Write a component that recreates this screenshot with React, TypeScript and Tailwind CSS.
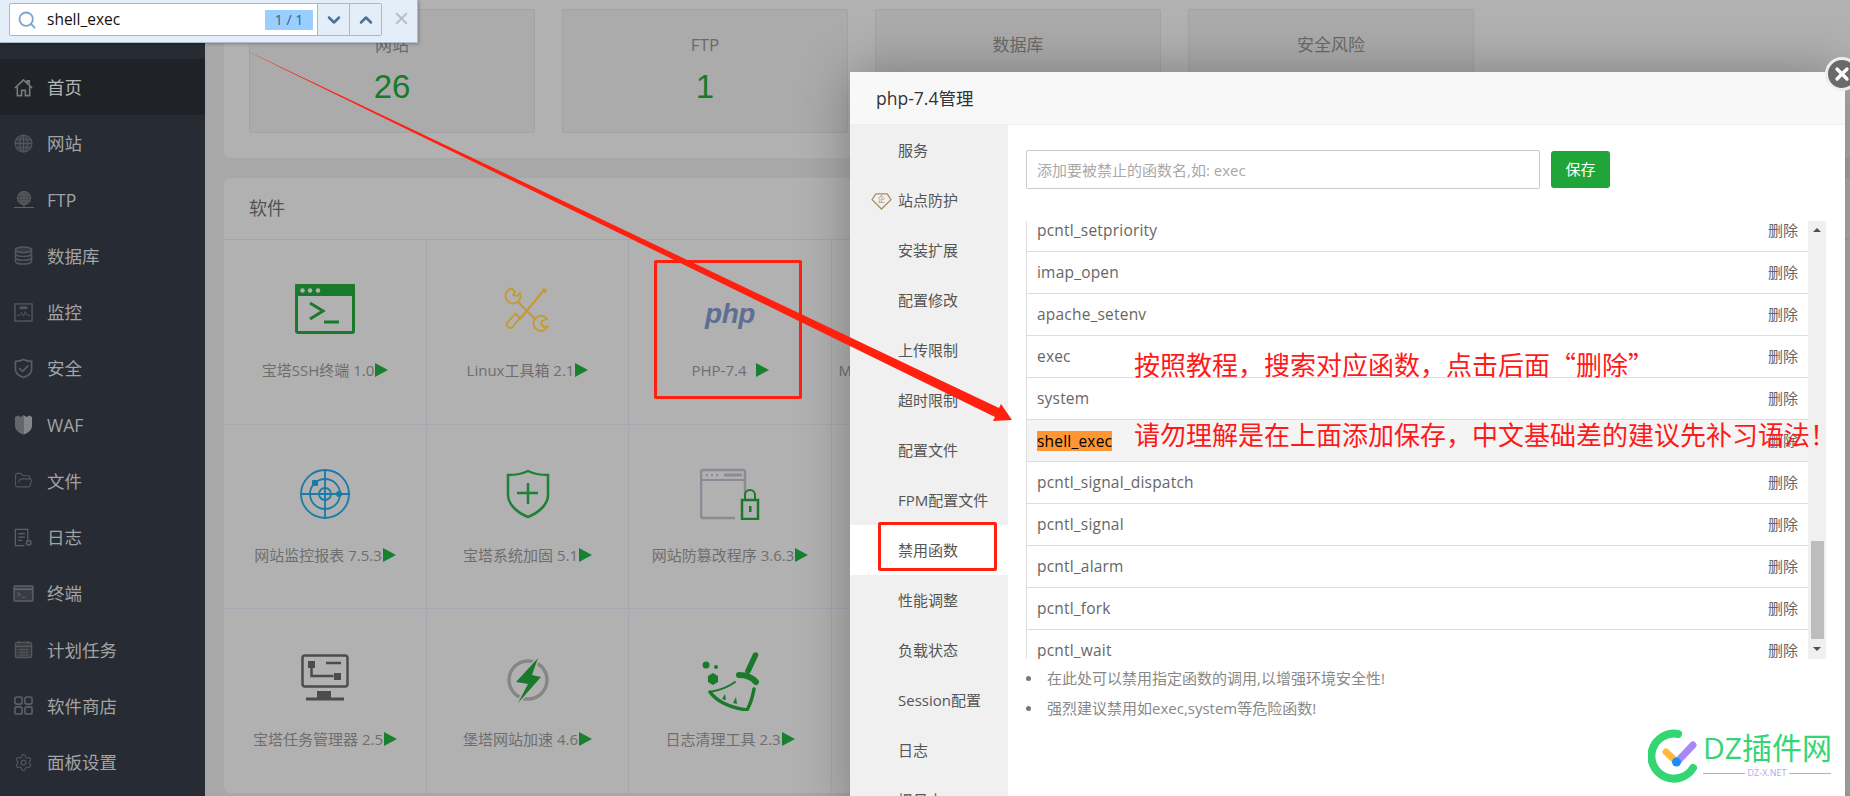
import { ChevronDown, ChevronUp, X, Search, FolderOpen, Settings } from 'lucide-react';
import type { ReactNode } from 'react';

const sideIcon = 'h-[19px] w-[19px] text-[#54575c]';

function HomeIcon() {
  return (
    <svg viewBox="0 0 20 20" className="h-[19px] w-[19px] text-[#7a7b7d]" fill="none" stroke="currentColor" strokeWidth="1.700">
      <path d="M1 10.500L10 2l4 3.800V3h2v4.500l3 3" />
      <path d="M3.500 9v9.500h4.500V13h4v5.500h4.500V9" />
    </svg>
  );
}

function GlobeIcon() {
  return (
    <svg viewBox="0 0 20 20" className={sideIcon} fill="#383b41" stroke="currentColor" strokeWidth="1.100">
      <circle cx="10" cy="10" r="9" />
      <ellipse cx="10" cy="10" rx="4" ry="9" fill="none" />
      <path d="M1 10h18M2.200 5.500h15.600M2.200 14.500h15.600M10 1v18" fill="none" />
    </svg>
  );
}

function FtpIcon() {
  return (
    <svg viewBox="0 0 20 20" className="h-[20px] w-[20px] text-[#5d6065]" fill="none" stroke="currentColor" strokeWidth="1.100">
      <circle cx="10" cy="8" r="6.500" fill="#383b41" />
      <ellipse cx="10" cy="8" rx="3" ry="6.500" />
      <path d="M3.500 8h13M4.500 5h11M4.500 11h11M10 1.500v13M0 17.500h20M10 15v2" />
    </svg>
  );
}

function DbIcon() {
  return (
    <svg viewBox="0 0 20 20" className={sideIcon} fill="none" stroke="currentColor" strokeWidth="1.600">
      <ellipse cx="10" cy="4" rx="8.500" ry="3" fill="#383b41" />
      <path d="M1.500 4v12c0 1.700 3.800 3 8.500 3s8.500-1.300 8.500-3V4" />
      <path d="M1.500 8c0 1.700 3.800 3 8.500 3s8.500-1.300 8.500-3M1.500 12c0 1.700 3.800 3 8.500 3s8.500-1.300 8.500-3" />
    </svg>
  );
}

function MonitorIcon() {
  return (
    <svg viewBox="0 0 20 20" className={sideIcon} fill="none" stroke="currentColor" strokeWidth="1.500">
      <rect x="1" y="1" width="18" height="18" />
      <path d="M3 13h3l2-3 2 4 2-5 2 4h3" strokeWidth="1" />
      <rect x="6" y="3.500" width="8" height="3" fill="currentColor" stroke="none" />
    </svg>
  );
}

function ShieldIcon() {
  return (
    <svg viewBox="0 0 20 22" className="h-[21px] w-[19px] text-[#5b5e63]" fill="none" stroke="currentColor" strokeWidth="1.800">
      <path d="M10 1.500c3 1.500 5.500 2 8.500 2V12c0 4-4 6.800-8.500 8.500C5.500 18.800 1.500 16 1.500 12V3.500c3 0 5.500-.5 8.500-2z" />
      <path d="M5.500 10.500l3.500 3.500 6-6" />
    </svg>
  );
}

function WafIcon() {
  return (
    <svg viewBox="0 0 20 22" className="h-[21px] w-[19px]">
      <path d="M1 3l3-1.500L7 3l3-2v20.500C5.500 20 1 17 1 12z" fill="#64676b" />
      <path d="M19 3l-3-1.500L13 3l-3-2v20.500c4.500-1.500 9-4.500 9-9.500z" fill="#84868a" />
    </svg>
  );
}

function LogIcon() {
  return (
    <svg viewBox="0 0 20 20" className="h-[19px] w-[19px] text-[#5d6065]" fill="none" stroke="currentColor" strokeWidth="1.300">
      <path d="M11 18.500H1.500v-17h13V12" />
      <path d="M4.500 6h7M4.500 9.500h7M4.500 13h4" />
      <circle cx="15.500" cy="15.500" r="2.300" strokeWidth="1.600" />
    </svg>
  );
}

function ConsoleIcon() {
  return (
    <svg viewBox="0 0 22 18" className="h-[17px] w-[21px] text-[#5f6267]" fill="none" stroke="currentColor" strokeWidth="1.500">
      <rect x="1" y="1" width="20" height="16" rx="1" fill="#383b41" />
      <path d="M1 4.500h20" strokeWidth="2" />
      <path d="M4.500 8l3 2-3 2M9 13h4" strokeWidth="1.200" />
    </svg>
  );
}

function CalendarIcon() {
  return (
    <svg viewBox="0 0 20 20" className={sideIcon} fill="none" stroke="currentColor" strokeWidth="1.500">
      <rect x="1.500" y="2.500" width="17" height="16" rx="2" fill="#383b41" />
      <path d="M5.500 1v3M14.500 1v3M1.500 6.500h17" />
      <path d="M4.500 10h11M4.500 13h11M4.500 16h11M7.500 9v8M10.500 9v8M13.500 9v8" strokeWidth="0.800" />
    </svg>
  );
}

function StoreIcon() {
  return (
    <svg viewBox="0 0 20 20" className="h-[19px] w-[19px] text-[#5d6065]" fill="none" stroke="currentColor" strokeWidth="1.700">
      <rect x="1" y="1" width="7.500" height="7.500" rx="2" />
      <rect x="11.500" y="1" width="7.500" height="7.500" rx="2" />
      <rect x="1" y="11.500" width="7.500" height="7.500" rx="2" />
      <rect x="11.500" y="11.500" width="7.500" height="7.500" rx="2" />
    </svg>
  );
}

const sideItems: { label: string; icon: ReactNode }[] = [
  { label: '首页', icon: <HomeIcon /> },
  { label: '网站', icon: <GlobeIcon /> },
  { label: 'FTP', icon: <FtpIcon /> },
  { label: '数据库', icon: <DbIcon /> },
  { label: '监控', icon: <MonitorIcon /> },
  { label: '安全', icon: <ShieldIcon /> },
  { label: 'WAF', icon: <WafIcon /> },
  { label: '文件', icon: <FolderOpen className={sideIcon} strokeWidth={1.4} /> },
  { label: '日志', icon: <LogIcon /> },
  { label: '终端', icon: <ConsoleIcon /> },
  { label: '计划任务', icon: <CalendarIcon /> },
  { label: '软件商店', icon: <StoreIcon /> },
  { label: '面板设置', icon: <Settings className={sideIcon} strokeWidth={1.4} /> },
];

function SshIcon() {
  return (
    <svg viewBox="0 0 60 50" className="h-[50px] w-[60px]">
      <rect x="1.500" y="1.500" width="57" height="47" rx="1.500" fill="none" stroke="#1a7a2c" strokeWidth="3" />
      <rect x="0" y="0" width="60" height="12" rx="1" fill="#1a7a2c" />
      <circle cx="7.500" cy="6.500" r="2.300" fill="#b0b0b0" />
      <circle cx="15" cy="6.500" r="2.300" fill="#b0b0b0" />
      <circle cx="23" cy="6.500" r="2.300" fill="#b0b0b0" />
      <path d="M15 19l13 8-13 8M29 38h15" fill="none" stroke="#1a7a2c" strokeWidth="3" />
    </svg>
  );
}

function ToolsIcon() {
  return (
    <svg viewBox="0 0 47 45" className="h-[45px] w-[47px]" fill="none" stroke="#c49a2e" strokeWidth="1.800">
      <path d="M40 3L16 32" strokeWidth="2" strokeLinecap="round" />
      <path d="M40 3l1 1" strokeWidth="3.500" strokeLinecap="round" />
      <path d="M11.500 26.500l4.500 4.500-8 9.500c-2 2-7-2-5-4.500z" strokeLinejoin="round" />
      <path d="M14 15l17 17" />
      <path d="M8 1.500L11 5 9 8l4 1 3-3A7.500 7.500 0 1 1 8 1.500z" strokeLinejoin="round" />
      <path d="M43 32l-5 2-1 3 3 3 4-1A7.500 7.500 0 1 1 43 32z" strokeLinejoin="round" />
    </svg>
  );
}

function PhpIcon() {
  return (
    <div className="flex h-[50px] w-[60px] items-center justify-center pt-[10px] font-['Liberation_Sans',sans-serif] text-[28px] font-bold italic tracking-[-0.5px] text-[#5f6f94]">
      php
    </div>
  );
}

function RadarIcon() {
  return (
    <svg viewBox="0 0 50 50" className="h-[50px] w-[50px]" fill="none" stroke="#1a7ba8" strokeWidth="1.800">
      <circle cx="25" cy="25" r="24" />
      <circle cx="25" cy="25" r="15" />
      <circle cx="25" cy="25" r="6" />
      <path d="M25 0v50M0 25h50" />
      <rect x="12" y="11" width="6" height="6" rx="1" fill="#1a7ba8" stroke="none" />
      <circle cx="39" cy="25" r="3" fill="#1a7ba8" stroke="none" />
    </svg>
  );
}

function ShieldPlusIcon() {
  return (
    <svg viewBox="0 0 46 50" className="h-[50px] w-[46px]" fill="none" stroke="#1d8136" strokeWidth="2.500">
      <path d="M23 2c6 3 12 4 20 4v20c0 10-10 18-20 22C13 44 3 36 3 26V6c8 0 14-1 20-4z" />
      <path d="M23 14v21M12 24h21" />
    </svg>
  );
}

function WindowLockIcon() {
  return (
    <svg viewBox="0 0 60 52" className="h-[52px] w-[60px]">
      <path d="M45 26V4a2 2 0 0 0-2-2H3a2 2 0 0 0-2 2v44a2 2 0 0 0 2 2h32" fill="none" stroke="#8a8b94" strokeWidth="2.500" />
      <path d="M1 12h44" stroke="#8a8b94" strokeWidth="2" />
      <path d="M24 7h18" stroke="#8a8b94" strokeWidth="3" />
      <circle cx="7" cy="7" r="1.200" fill="#8a8b94" />
      <circle cx="12" cy="7" r="1.200" fill="#8a8b94" />
      <circle cx="17" cy="7" r="1.200" fill="#8a8b94" />
      <rect x="42" y="32" width="16" height="19" fill="none" stroke="#1a7a2c" strokeWidth="2.500" />
      <path d="M45 32v-5a5 5 0 0 1 10 0v5" fill="none" stroke="#1a7a2c" strokeWidth="2" />
      <rect x="49" y="38" width="2.500" height="6" fill="#1a7a2c" />
    </svg>
  );
}

function TaskIcon() {
  return (
    <svg viewBox="0 0 48 48" className="h-[48px] w-[48px]" fill="none" stroke="#4c4c4c" strokeWidth="2.500">
      <rect x="1.500" y="1.500" width="45" height="31" rx="2.500" />
      <rect x="7" y="7" width="7" height="7" fill="#4c4c4c" stroke="none" />
      <rect x="33" y="19" width="7" height="7" fill="#4c4c4c" stroke="none" />
      <path d="M10.500 14v8h22M25 9h15" />
      <rect x="16" y="37" width="14" height="7" fill="#4c4c4c" stroke="none" />
      <path d="M5 45h38" strokeWidth="3" />
    </svg>
  );
}

function BoltIcon() {
  return (
    <svg viewBox="0 0 46 48" className="mt-[6px] h-[48px] w-[46px]">
      <circle cx="23" cy="23" r="19" fill="none" stroke="#868686" strokeWidth="3.500" />
      <polygon points="33,1 11,25 23,27 13,46 36,20 27,18" fill="#1a7a2c" stroke="#b1b1b1" strokeWidth="3" paintOrder="stroke" />
    </svg>
  );
}

function BroomIcon() {
  return (
    <svg viewBox="0 0 60 60" className="mt-[6px] h-[60px] w-[60px]" fill="none" stroke="#1a7a2c">
      <path d="M55.500 4L48 20" strokeWidth="5.500" strokeLinecap="round" />
      <path d="M39 24Q50 24 56 31" strokeWidth="6" strokeLinecap="round" />
      <path d="M35 31Q26 38 10 41" strokeWidth="2" strokeLinecap="round" />
      <path d="M10 41Q20 55 47 59Q52 50 54 38" strokeWidth="3.500" strokeLinejoin="round" strokeLinecap="round" />
      <path d="M22 48l3-5 1 6zM33 52l3-6 1 7z" fill="#1a7a2c" stroke="none" />
      <circle cx="6" cy="14" r="3.500" fill="#1a7a2c" stroke="none" />
      <circle cx="16" cy="16" r="2" fill="#1a7a2c" stroke="none" />
      <path d="M8 25l5-3 5 3v6l-5 3-5-3z" fill="#1a7a2c" stroke="none" />
    </svg>
  );
}

const softwareRows: { label: string; icon: ReactNode; gap?: boolean }[] = [
  { label: '宝塔SSH终端 1.0', icon: <SshIcon /> },
  { label: 'Linux工具箱 2.1', icon: <ToolsIcon /> },
  { label: 'PHP-7.4', icon: <PhpIcon />, gap: true },
  { label: 'MySQL主从复制(重构版) 2', icon: null },
  { label: '网站监控报表 7.5.3', icon: <RadarIcon /> },
  { label: '宝塔系统加固 5.1', icon: <ShieldPlusIcon /> },
  { label: '网站防篡改程序 3.6.3', icon: <WindowLockIcon /> },
  { label: '', icon: null },
  { label: '宝塔任务管理器 2.5', icon: <TaskIcon /> },
  { label: '堡塔网站加速 4.6', icon: <BoltIcon /> },
  { label: '日志清理工具 2.3', icon: <BroomIcon /> },
  { label: '', icon: null },
];

const stats = [
  { title: '网站', value: '26' },
  { title: 'FTP', value: '1' },
  { title: '数据库', value: '' },
  { title: '安全风险', value: '' },
];

const modalNav = ['服务', '站点防护', '安装扩展', '配置修改', '上传限制', '超时限制', '配置文件', 'FPM配置文件', '禁用函数', '性能调整', '负载状态', 'Session配置', '日志', '慢日志'];

const functions = ['pcntl_setpriority', 'imap_open', 'apache_setenv', 'exec', 'system', 'shell_exec', 'pcntl_signal_dispatch', 'pcntl_signal', 'pcntl_alarm', 'pcntl_fork', 'pcntl_wait'];

function FindBar() {
  return (
    <div className="absolute left-0 top-0 z-40 flex h-[43px] w-[418px] items-start border-b border-r border-[#a9bcd0] bg-[#e4eef9] pl-[9px] pt-[3px] shadow-[1px_1px_3px_rgba(0,0,0,0.25)]">
      <div className="flex h-[33px] w-[373px] items-center rounded-[2px] border border-[#a6b8cc] bg-white">
        <Search className="ml-[7px] h-[20px] w-[20px] text-[#7ba7cf]" strokeWidth={2.2} />
        <span className="ml-[10px] flex-1 text-[15.500px] text-[#111]">shell_exec</span>
        <span className="flex h-[20px] w-[48px] items-center justify-center bg-[#99ceff] text-[14px] text-[#3a5f85]">1 / 1</span>
        <span className="ml-[4px] flex h-full w-[32px] items-center justify-center border-l border-[#a6b8cc] bg-[#e4eef9]">
          <ChevronDown className="h-[20px] w-[20px] text-[#4e7096]" strokeWidth={3} />
        </span>
        <span className="flex h-full w-[32px] items-center justify-center border-l border-[#a6b8cc] bg-[#e4eef9]">
          <ChevronUp className="h-[20px] w-[20px] text-[#4e7096]" strokeWidth={3} />
        </span>
      </div>
      <X className="ml-[10px] mt-[6px] h-[19px] w-[19px] text-[#b9bdc2]" strokeWidth={2.5} />
    </div>
  );
}

function Sidebar() {
  return (
    <aside className="w-[205px] shrink-0 bg-[#272b33] pt-[59px]">
      {sideItems.map((item, i) => (
        <div key={item.label} className={`flex h-[56.25px] items-center ${i === 0 ? 'bg-[#1f2226] text-[#b4b4b4]' : 'text-[#a3a3a3]'}`}>
          <span className="flex w-[48px] justify-center pr-[1px]">{item.icon}</span>
          <span className="-ml-[1px] text-[17.500px]">{item.label}</span>
        </div>
      ))}
    </aside>
  );
}

function Main() {
  return (
    <main className="flex-1 bg-[#a8a8a8] pl-[19px]">
      <section className="flex h-[158px] gap-[27px] rounded-bl-[6px] bg-[#b1b1b1] pl-[25px] pt-[9px]">
        {stats.map((s) => (
          <div key={s.title} className="flex h-[124px] w-[286px] flex-col items-center rounded-[2px] border border-[#a3a3a3] bg-[#ababab] pt-[23px]">
            <span className="text-[17px] leading-[24px] text-[#6a6a6a]">{s.title}</span>
            <span className="mt-[10px] font-['Liberation_Sans',sans-serif] text-[33px] leading-[40px] text-[#197a2b]">{s.value}</span>
          </div>
        ))}
      </section>
      <section className="mt-[20px] h-[615px] rounded-l-[6px] bg-[#b1b1b1]">
        <div className="flex h-[62px] items-center border-b border-[#a5a5a5] pl-[25px] text-[18px] text-[#525252]">软件</div>
        <div className="grid grid-cols-[203px_202px_203px_203px] grid-rows-[185px_184px_184px]">
          {softwareRows.map((cell, i) => (
            <div key={i} className={`flex flex-col items-center border-r border-[#a7a7b2] pt-[44px] ${i < 8 ? 'border-b' : ''}`}>
              <div className="flex h-[50px] items-center justify-center">{cell.icon}</div>
              {cell.label && (
                <div className="mt-[26px] flex h-[20px] items-center whitespace-nowrap text-[15px] text-[#6e6e6e]">
                  {cell.label}
                  <span className={`h-0 w-0 border-y-[7.500px] border-l-[13px] border-y-transparent border-l-[#17812f] ${cell.gap ? 'ml-[9px]' : 'ml-[1px]'}`} />
                </div>
              )}
            </div>
          ))}
        </div>
      </section>
    </main>
  );
}

function PhpModal() {
  return (
    <div className="absolute left-[850px] top-[72px] z-20 h-[750px] w-[995px] bg-white shadow-[1px_1px_50px_rgba(0,0,0,0.3)]">
      <div className="flex h-[53px] items-center border-b border-[#eeeeee] bg-[#f8f8f8] pl-[26px] text-[17.500px] text-[#333]">php-7.4管理</div>
      <div className="flex">
        <nav className="h-[700px] w-[158px] shrink-0 bg-[#f0f0f0]">
          {modalNav.map((name, i) => (
            <div key={name} className={`relative flex h-[50px] items-center pl-[48px] text-[15px] text-[#555] ${i === 8 ? 'bg-white' : ''}`}>
              {i === 1 && (
                <svg viewBox="0 0 22 18" className="absolute left-[21px] top-[18px] h-[17px] w-[21px]" fill="none" stroke="#a98c5e" strokeWidth="1.300">
                  <path d="M5 1h12l4 6-10 10L1 7z" />
                  <text x="11" y="10" textAnchor="middle" fontSize="8" fill="#a98c5e" stroke="none">企</text>
                </svg>
              )}
              {name}
            </div>
          ))}
        </nav>
        <div className="flex-1 pl-[18px] pt-[25px]">
          <div className="flex items-center">
            <input
              type="text"
              readOnly
              placeholder="添加要被禁止的函数名,如: exec"
              className="h-[39px] w-[514px] rounded-[2px] border border-[#cccccc] pl-[10px] text-[15px] placeholder:text-[#a9a9a9]"
            />
            <button type="button" className="ml-[11px] h-[37px] w-[59px] rounded-[3px] bg-[#20a53a] text-[15px] text-white">保存</button>
          </div>
          <div className="mt-[32px] flex h-[438px] w-[800px]">
            <div className="w-[782px] overflow-hidden border-l border-[#dddddd]">
              <div className="-mt-[11px]">
                {functions.map((fn) => (
                  <div key={fn} className={`flex h-[42px] items-center justify-between border-b border-[#dddddd] pl-[10px] pr-[10px] text-[#666] ${fn === 'shell_exec' ? 'bg-[#f4f4f4]' : ''}`}>
                    {fn === 'shell_exec' ? (
                      <span className="bg-[#ff9632] text-[15.500px] leading-[20px] tracking-[0.2px] text-black">{fn}</span>
                    ) : (
                      <span className="text-[15.500px] tracking-[0.2px]">{fn}</span>
                    )}
                    <span className="text-[15px] text-[#666]">删除</span>
                  </div>
                ))}
              </div>
            </div>
            <div className="flex w-[18px] flex-col items-center bg-[#f0f0f0]">
              <span className="mt-[7px] h-0 w-0 border-x-[4px] border-b-[4px] border-x-transparent border-b-[#505050]" />
              <span className="mt-[309px] h-[98px] w-[13px] bg-[#bdbdbd]" />
              <span className="mt-[8px] h-0 w-0 border-x-[4px] border-t-[4px] border-x-transparent border-t-[#505050]" />
            </div>
          </div>
          <ul className="mt-[4px] list-none text-[15px] text-[#888]">
            <li className="flex h-[30px] items-center"><span className="mr-[16px] h-[5px] w-[5px] rounded-full bg-[#777]" />在此处可以禁用指定函数的调用,以增强环境安全性!</li>
            <li className="flex h-[30px] items-center"><span className="mr-[16px] h-[5px] w-[5px] rounded-full bg-[#777]" />强烈建议禁用如exec,system等危险函数!</li>
          </ul>
        </div>
      </div>
    </div>
  );
}

function CloseButton() {
  return (
    <div className="absolute left-[1825px] top-[57px] z-30 flex h-[34px] w-[34px] items-center justify-center rounded-full border-[3px] border-[#eeeeee] bg-[#6a6a6a]">
      <X className="h-[20px] w-[20px] text-white" strokeWidth={4} />
    </div>
  );
}

function Watermark() {
  return (
    <div className="absolute left-[1648px] top-[729px] z-30 flex items-start">
      <svg viewBox="0 0 54 54" className="h-[54px] w-[54px]" fill="none">
        <path d="M30 5A22.500 22.500 0 1 0 45 39" stroke="#34d673" strokeWidth="8" strokeLinecap="round" />
        <path d="M18 23l11 10" stroke="#ffb941" strokeWidth="7" strokeLinecap="round" />
        <path d="M29 33l16-17" stroke="#a888f8" strokeWidth="7" strokeLinecap="round" />
        <circle cx="28.500" cy="33" r="4.500" fill="#1c8cf8" />
      </svg>
      <div className="ml-[1px] flex w-[128px] flex-col">
        <span className="mt-[2px] whitespace-nowrap text-[30px] leading-[34px] text-[#34d673]">DZ插件网</span>
        <span className="mt-[3px] flex items-center gap-[3px] text-[9px] leading-[10px] text-[#b9a3f5]">
          <span className="h-px flex-1 bg-[#b9a3f5]" />
          DZ-X.NET
          <span className="h-px flex-1 bg-[#b9a3f5]" />
        </span>
      </div>
    </div>
  );
}

function Annotations() {
  return (
    <>
      <svg viewBox="0 0 1850 796" className="pointer-events-none absolute left-0 top-0 z-30 h-[796px] w-[1850px]">
        <polygon points="245,50 999,408 1001,404 1012,420 993,421 995,417" fill="#ff2010" />
      </svg>
      <div className="absolute left-[654px] top-[260px] z-10 h-[139px] w-[148px] rounded-[2px] border-[3px] border-[#ff2010]" />
      <div className="absolute left-[878px] top-[522px] z-30 h-[49px] w-[119px] rounded-[2px] border-[3px] border-[#ff2010]" />
      <div className="absolute left-[1134px] top-[346px] z-30 whitespace-nowrap font-['Noto_Sans_CJK_SC',sans-serif] text-[26px] leading-[36px] text-[#ff1a1a]">按照教程，搜索对应函数，点击后面“删除”</div>
      <div className="absolute left-[1134px] top-[416px] z-30 whitespace-nowrap font-['Noto_Sans_CJK_SC',sans-serif] text-[26px] leading-[36px] text-[#ff1a1a]">请勿理解是在上面添加保存，中文基础差的建议先补习语法！</div>
    </>
  );
}

export default function App() {
  return (
    <div className="relative flex h-[796px] w-[1850px] overflow-hidden font-['Open_Sans','Noto_Sans_CJK_SC',sans-serif]">
      <Sidebar />
      <Main />
      <PhpModal />
      <CloseButton />
      <Annotations />
      <Watermark />
      <FindBar />
    </div>
  );
}
